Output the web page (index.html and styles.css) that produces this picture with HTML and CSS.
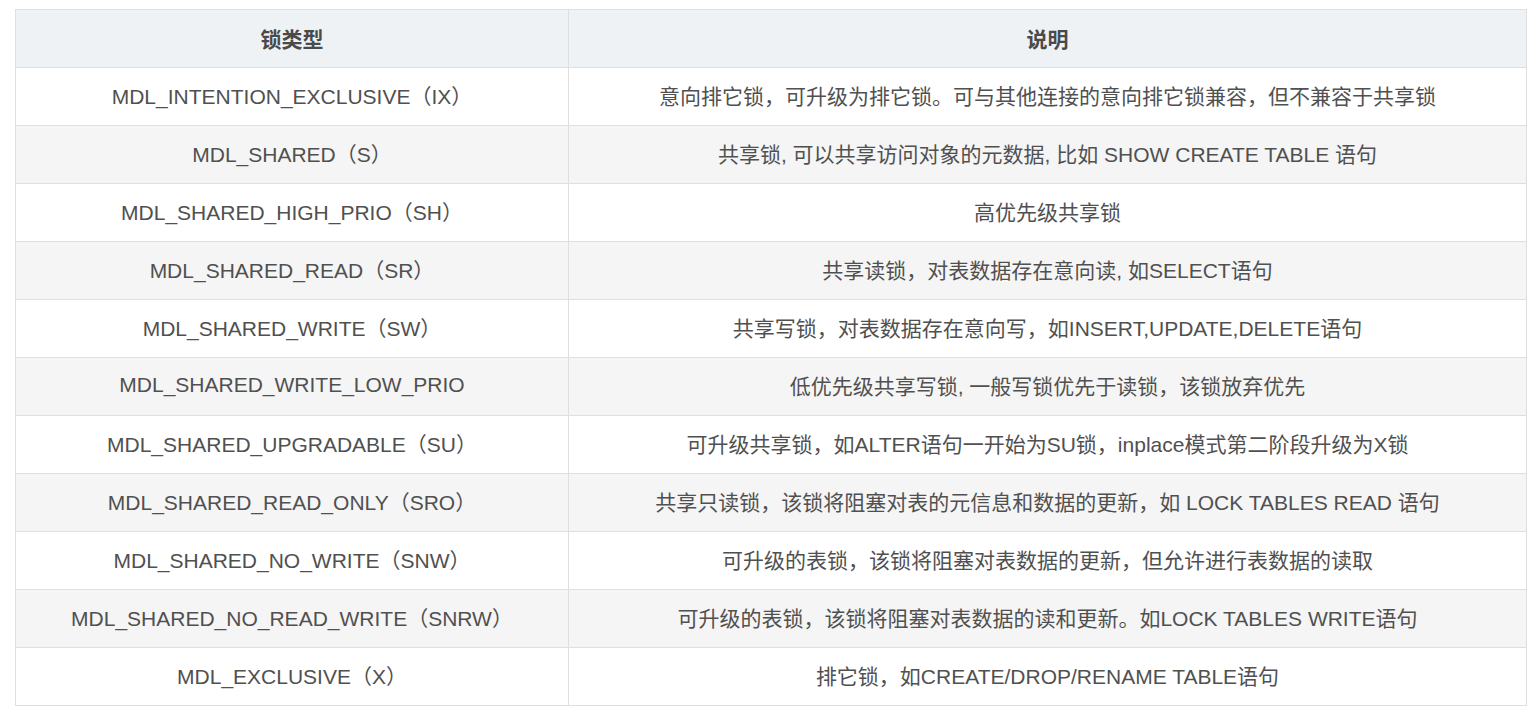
FILE: index.html
```html
<!DOCTYPE html>
<html lang="zh-CN">
<head>
<meta charset="utf-8">
<link rel="stylesheet" href="styles.css">
</head>
<body>
<div class="wrap">
<table class="lock-table">
  <thead>
    <tr><th class="c1">锁类型</th><th class="c2">说明</th></tr>
  </thead>
  <tbody>
    <tr><td>MDL_INTENTION_EXCLUSIVE（IX）</td><td>意向排它锁，可升级为排它锁。可与其他连接的意向排它锁兼容，但不兼容于共享锁</td></tr>
    <tr><td>MDL_SHARED（S）</td><td>共享锁, 可以共享访问对象的元数据, 比如 SHOW CREATE TABLE 语句</td></tr>
    <tr><td>MDL_SHARED_HIGH_PRIO（SH）</td><td>高优先级共享锁</td></tr>
    <tr><td>MDL_SHARED_READ（SR）</td><td>共享读锁，对表数据存在意向读, 如SELECT语句</td></tr>
    <tr><td>MDL_SHARED_WRITE（SW）</td><td>共享写锁，对表数据存在意向写，如INSERT,UPDATE,DELETE语句</td></tr>
    <tr><td>MDL_SHARED_WRITE_LOW_PRIO</td><td>低优先级共享写锁, 一般写锁优先于读锁，该锁放弃优先</td></tr>
    <tr><td>MDL_SHARED_UPGRADABLE（SU）</td><td>可升级共享锁，如ALTER语句一开始为SU锁，inplace模式第二阶段升级为X锁</td></tr>
    <tr><td>MDL_SHARED_READ_ONLY（SRO）</td><td>共享只读锁，该锁将阻塞对表的元信息和数据的更新，如 LOCK TABLES READ 语句</td></tr>
    <tr><td>MDL_SHARED_NO_WRITE（SNW）</td><td>可升级的表锁，该锁将阻塞对表数据的更新，但允许进行表数据的读取</td></tr>
    <tr><td>MDL_SHARED_NO_READ_WRITE（SNRW）</td><td>可升级的表锁，该锁将阻塞对表数据的读和更新。如LOCK TABLES WRITE语句</td></tr>
    <tr><td>MDL_EXCLUSIVE（X）</td><td>排它锁，如CREATE/DROP/RENAME TABLE语句</td></tr>
  </tbody>
</table>
</div>
</body>
</html>
```

FILE: styles.css
```css
html, body {
  margin: 0;
  padding: 0;
  background: #ffffff;
}
.wrap {
  padding: 9px 10px 0 15px;
}
.lock-table {
  width: 1512px;
  border-collapse: collapse;
  font-family: "Liberation Sans", Arial, "Noto Sans CJK SC", sans-serif;
  font-size: 21px;
  color: #505050;
  table-layout: fixed;
}
.lock-table th,
.lock-table td {
  border: 1px solid #dfdfdf;
  height: 58px;
  padding: 0 8px 3px;
  text-align: center;
  vertical-align: middle;
  box-sizing: border-box;
}
.lock-table th {
  background: #eff2f5;
  font-weight: bold;
  color: #4a4a4a;
  padding-bottom: 2px;
}
.lock-table .c1 { width: 553px; }
.lock-table tbody tr:nth-child(even) td {
  background: #f5f5f5;
}
```
